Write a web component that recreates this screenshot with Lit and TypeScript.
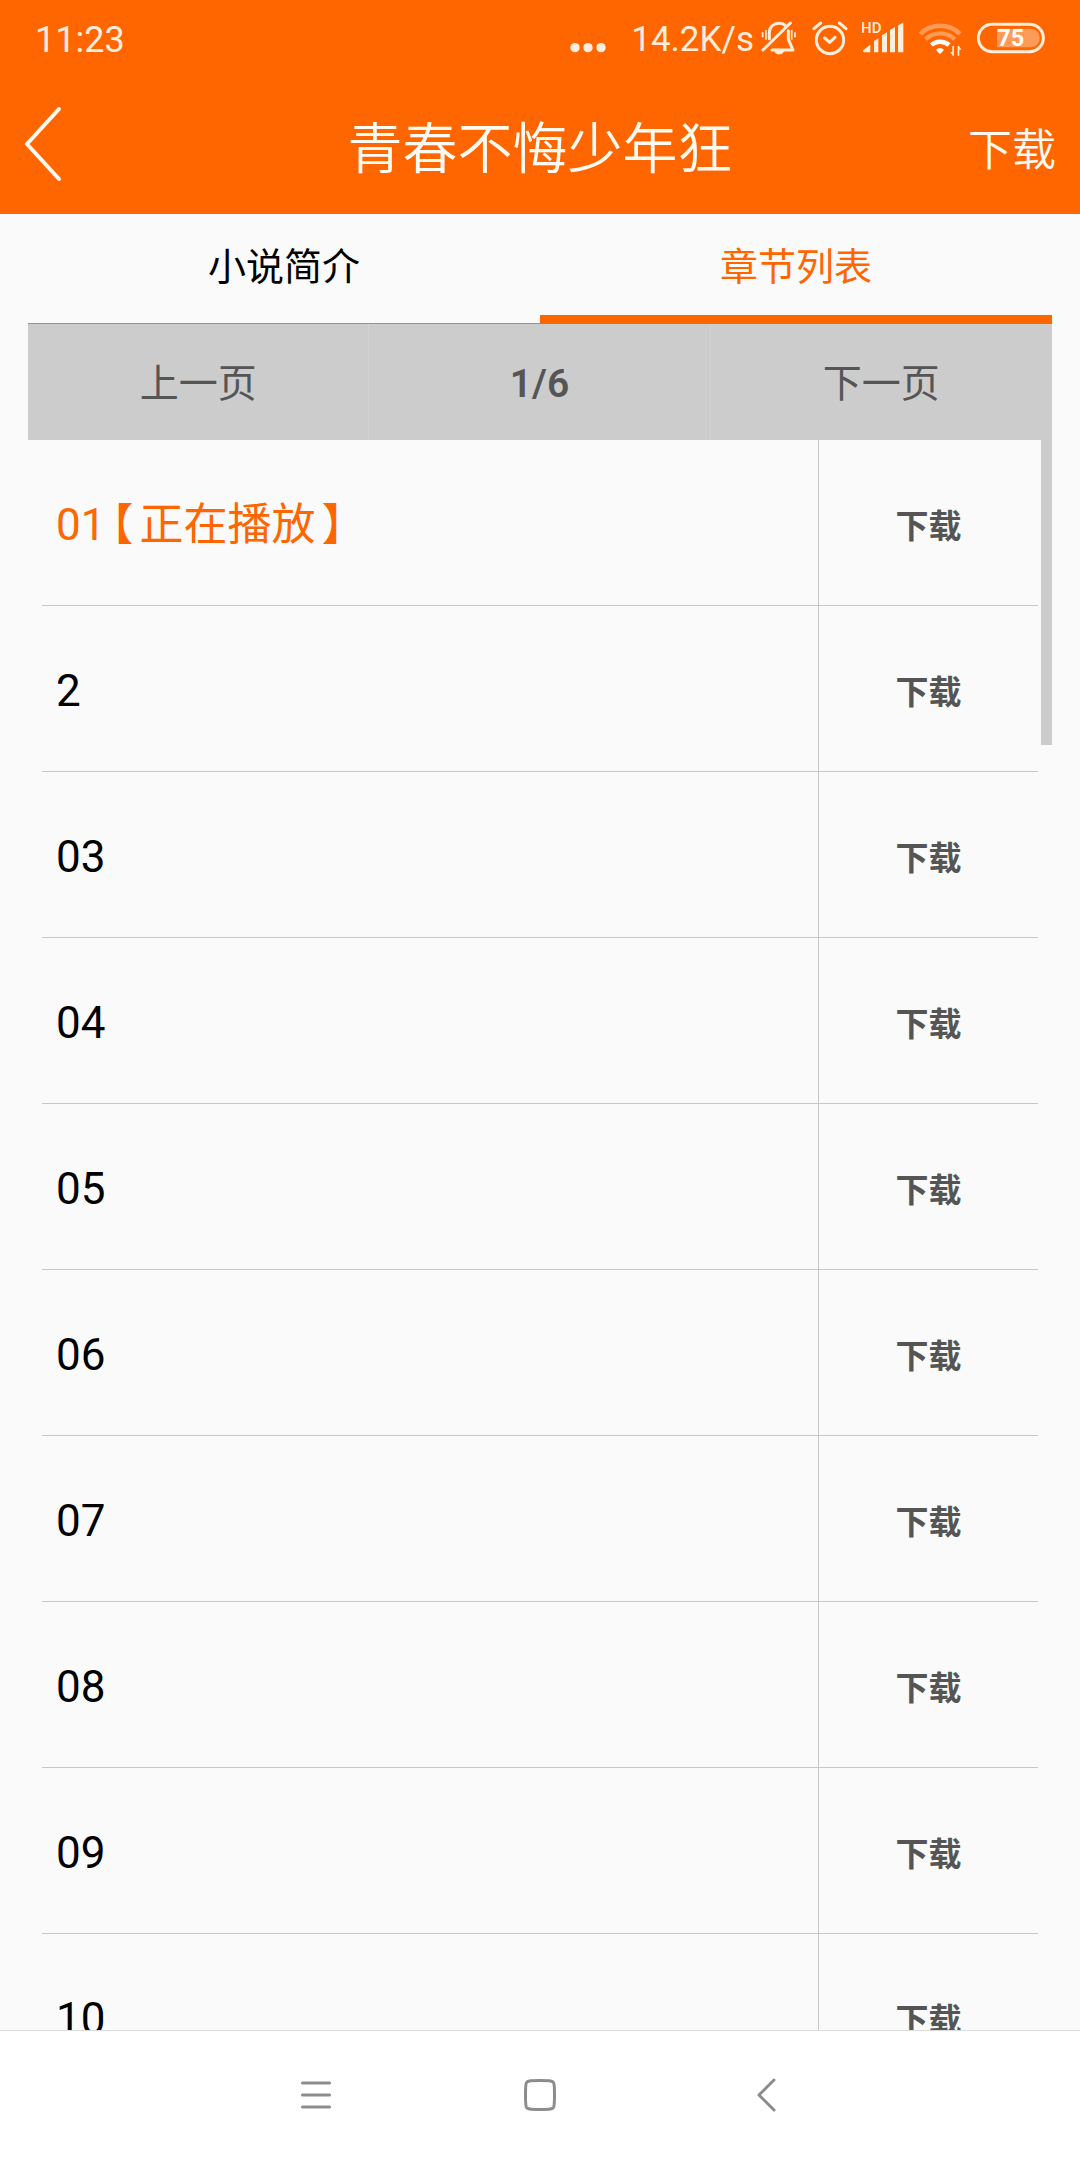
import { LitElement, html, css, svg } from "lit";
import { customElement, state } from "lit/decorators.js";

const CHAPTERS = ["01", "2", "03", "04", "05", "06", "07", "08", "09", "10"];

@customElement("status-bar")
class StatusBar extends LitElement {
  static styles = css`
    :host {
      display: flex;
      align-items: center;
      justify-content: space-between;
      height: 76px;
      padding: 0 35px;
      color: #ffeedd;
      font-size: 36px;
      line-height: 44px;
    }
    .side {
      display: flex;
      align-items: center;
      gap: 14px;
    }
    .net {
      display: flex;
      align-items: center;
      gap: 6px;
      font-size: 35px;
    }
    .text {
      padding-top: 4px;
    }
    svg {
      display: block;
      height: 40px;
    }
    .dots { width: 40px; margin-right: 8px; }
    .bell { width: 38px; }
    .alarm { width: 36px; }
    .signal { width: 42px; }
    .wifi { width: 45px; }
    .battery { width: 68px; }
    .line {
      fill: none;
      stroke: currentColor;
      stroke-width: 9;
      stroke-linecap: round;
      stroke-linejoin: round;
    }
    .solid { fill: currentColor; }
    .dim { opacity: 0.35; }
    .small { font-size: 45px; font-weight: 500; fill: currentColor; }
    .level { font-size: 70px; font-weight: 700; fill: #fff; }
  `;

  render() {
    return html`
      <span class="text">11:23</span>
      <div class="side">
        <svg class="dots" viewBox="0 54 120 120" aria-hidden="true">
          <circle class="solid" cx="18" cy="143" r="14" />
          <circle class="solid" cx="57" cy="143" r="14" />
          <circle class="solid" cx="96" cy="143" r="14" />
        </svg>
        <div class="net">
          <span class="text">14.2K/s</span>
          <svg class="bell" viewBox="60 54 114 120" aria-hidden="true">
            <path class="line" d="M88 116V98C88 80 101 70 117 70C126 70 133 73 138 78M145 92V118L159 150H96" />
            <path class="line" d="M151 69L69 150" />
            <path class="solid" d="M103 153H132C130 160 125 163 118 163C110 163 105 160 103 153Z" />
            <path d="M68 97V112M78 90V119M155 90V119M165 97V112" fill="none" stroke="currentColor" stroke-width="5" />
          </svg>
        </div>
        <svg class="alarm" viewBox="216 54 108 120" aria-hidden="true">
          <circle class="line" cx="270" cy="120" r="41" />
          <path class="line" d="M254 114L269 127L285 112M222 86L242 69M298 69L318 86" />
        </svg>
        <svg class="signal" viewBox="366 54 126 120" aria-hidden="true">
          <text class="small" x="363" y="98">HD</text>
          <path class="solid" d="M370 150L391 134V157H373Q367 156 370 150ZM402 123L415 115V157H402ZM426 106L441 97V157H426ZM450 90L465 81V157H450ZM474 77L486 69Q490 68 490 72V157H474Z" />
        </svg>
        <svg class="wifi" viewBox="534 54 135 120" aria-hidden="true">
          <g class="dim">
            <path fill="none" stroke="#fff" stroke-width="13" d="M541 102C572 69 628 69 660 102" />
            <path fill="none" stroke="#fff" stroke-width="13" d="M557 118C581 94 620 94 644 118" />
          </g>
          <path fill="none" stroke="#fff" stroke-width="13" d="M574 135C588 122 612 122 627 135" />
          <path fill="#fff" d="M588 149Q600 139 612 149L603 160Q600 163 597 160Z" />
          <path class="solid" d="M642 138V167H638L631 156H637V138ZM653 167V138H657L664 149H658V167Z" />
        </svg>
        <svg class="battery" viewBox="711 54 204 120" role="img" aria-label="75%">
          <rect class="line" x="715" y="73" width="195" height="82" rx="41" />
          <path fill="#fff" opacity="0.35" d="M771 86H870Q899 88 899 114Q899 140 870 142H771Z" />
          <text class="level" x="772" y="139">75</text>
        </svg>
      </div>
    `;
  }
}

@customElement("chapter-row")
class ChapterRow extends LitElement {
  static properties = {
    label: { type: String },
    playing: { type: Boolean },
  };
  declare label: string;
  declare playing: boolean;

  static styles = css`
    :host {
      display: flex;
      flex: none;
      height: 165px;
      border-bottom: 1px solid #c8c8c8;
    }
    button {
      border: 0;
      margin: 0;
      background: none;
      font: inherit;
      cursor: pointer;
    }
    .open {
      flex: 1;
      padding: 4px 14px 0;
      text-align: left;
      font-size: 44px;
      line-height: 52px;
      color: #000;
    }
    .playing {
      color: #f60;
    }
    .bracket {
      margin: 0 6px;
      font-feature-settings: "halt";
    }
    .get {
      width: 220px;
      padding: 8px 0 0;
      border-left: 1px solid #c8c8c8;
      font-size: 33px;
      line-height: 40px;
      font-weight: 700;
      color: #555;
    }
  `;

  render() {
    const mark = html`<span class="bracket">【</span>正在播放<span class="bracket">】</span>`;
    return html`
      <button class="open ${this.playing ? "playing" : ""}">${this.label}${this.playing ? mark : ""}</button>
      <button class="get">下载</button>
    `;
  }
}

@customElement("app-root")
class AppRoot extends LitElement {
  @state() private tab = 1;

  static styles = css`
    :host {
      display: flex;
      flex-direction: column;
      height: 100vh;
      background: #fafafa;
      font-family: Roboto, "Noto Sans CJK SC", sans-serif;
      color: #000;
    }
    button {
      border: 0;
      margin: 0;
      padding: 0;
      background: none;
      font: inherit;
      color: inherit;
      cursor: pointer;
    }
    svg { display: block; }
    .top {
      flex: none;
      background: #f60;
      color: #fffaf2;
    }
    .title-bar {
      display: grid;
      grid-template-columns: 1fr auto 1fr;
      align-items: center;
      height: 138px;
      padding: 0 24px;
    }
    .back { justify-self: start; padding-bottom: 2px; }
    .title {
      margin: 0;
      font-size: 55px;
      line-height: 80px;
      font-weight: 350;
      padding-top: 8px;
    }
    .download {
      justify-self: end;
      font-size: 44px;
      line-height: 64px;
      font-weight: 350;
      padding-top: 12px;
    }
    .content {
      flex: 1;
      min-height: 0;
      display: flex;
      flex-direction: column;
      padding: 0 28px;
    }
    .tabs {
      flex: none;
      display: grid;
      grid-template-columns: 1fr 1fr;
      height: 110px;
    }
    .tab {
      font-size: 38px;
      line-height: 44px;
      padding-bottom: 4px;
      border-bottom: 1px solid #c08a4a;
    }
    .tab.active {
      padding: 4px 0 0;
      border-bottom: 9px solid #f60;
      color: #f60;
    }
    .pager {
      flex: none;
      display: grid;
      grid-template-columns: 1fr 1fr 1fr;
      align-items: stretch;
      height: 116px;
      background: #ccc;
      color: #555;
      font-size: 39px;
      line-height: 48px;
    }
    .cell {
      display: flex;
      align-items: center;
      justify-content: center;
      padding-top: 4px;
      border-right: 1px solid #d2d2d2;
    }
    .cell:last-child { border-right: 0; }
    .count { font-weight: 600; }
    .list-area {
      position: relative;
      flex: 1;
      min-height: 0;
      display: flex;
    }
    .list {
      flex: 1;
      display: flex;
      flex-direction: column;
      padding: 0 14px;
      overflow-y: auto;
      scrollbar-width: none;
    }
    .thumb {
      position: absolute;
      top: 0;
      right: 0;
      width: 11px;
      height: 305px;
      background: #ccc;
    }
    .nav {
      flex: none;
      display: flex;
      justify-content: center;
      height: 129px;
      border-top: 1px solid #dcdcdc;
      background: #fff;
      color: #8c8c8c;
    }
    .key {
      display: grid;
      place-items: center;
      width: 224px;
      padding-bottom: 2px;
    }
    .stroke {
      fill: none;
      stroke: currentColor;
      stroke-width: 3;
      stroke-linecap: round;
      stroke-linejoin: round;
    }
    .back .stroke { stroke-width: 4; }
  `;

  private tabButton(name: string, index: number) {
    const active = this.tab === index;
    return html`<button
      class="tab ${active ? "active" : ""}"
      role="tab"
      aria-selected=${active ? "true" : "false"}
      @click=${() => (this.tab = index)}
    >${name}</button>`;
  }

  private key(label: string, shape: unknown) {
    return html`<button class="key" aria-label=${label}>
      <svg width="40" height="40" viewBox="0 0 40 40">${shape}</svg>
    </button>`;
  }

  render() {
    return html`
      <header class="top">
        <status-bar></status-bar>
        <div class="title-bar">
          <button class="back" aria-label="返回">
            <svg width="40" height="76" viewBox="0 0 40 76">
              <path class="stroke" d="M35 3L3 38L35 73" />
            </svg>
          </button>
          <h1 class="title">青春不悔少年狂</h1>
          <button class="download">下载</button>
        </div>
      </header>
      <main class="content">
        <div class="tabs" role="tablist">
          ${this.tabButton("小说简介", 0)}${this.tabButton("章节列表", 1)}
        </div>
        <div class="pager">
          <button class="cell">上一页</button>
          <span class="cell count">1/6</span>
          <button class="cell">下一页</button>
        </div>
        <div class="list-area">
          <div class="list">
            ${CHAPTERS.map(
              (name, i) => html`<chapter-row .label=${name} .playing=${i === 0}></chapter-row>`
            )}
          </div>
          <div class="thumb"></div>
        </div>
      </main>
      <nav class="nav">
        ${this.key("菜单", svg`<path class="stroke" d="M6.500 8H33.500M6.500 20H33.500M6.500 32H33.500" />`)}
        ${this.key("主页", svg`<path class="stroke" d="M20 5.500C31 5.500 32.500 6 33.500 7.500C34.500 9 34.500 11 34.500 20C34.500 29 34.500 31 33.500 32.500C32.500 34 31 34.500 20 34.500C9 34.500 7.500 34 6.500 32.500C5.500 31 5.500 29 5.500 20C5.500 11 5.500 9 6.500 7.500C7.500 6 9 5.500 20 5.500Z" />`)}
        ${this.key("返回", svg`<path class="stroke" d="M30 5L15 20L30 35" />`)}
      </nav>
    `;
  }
}
